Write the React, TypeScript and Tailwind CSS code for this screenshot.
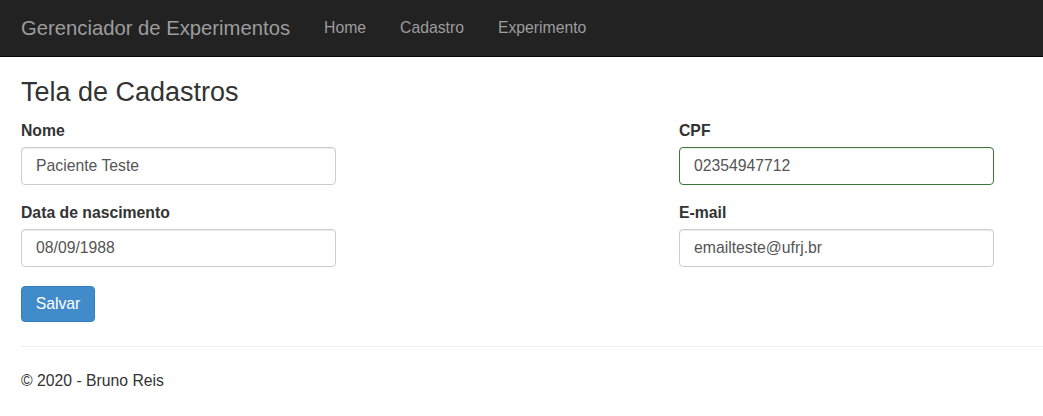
import React from 'react'

const navLinks = ['Home', 'Cadastro', 'Experimento']

function Field({label, value, success}: {label: string; value: string; success?: boolean}) {
  return (
    <div className="flex flex-col">
      <label className="text-[15.75px] leading-[22px] font-bold text-[#333]">{label}</label>
      <input
        readOnly
        value={value}
        className={`mt-[5px] w-[315px] h-[38px] rounded-[4px] border px-[14px] text-[15.75px] text-[#555] bg-white outline-none shadow-[inset_0_1px_1px_rgba(0,0,0,0.075)] ${success ? 'border-[#3c763d]' : 'border-[#ccc]'}`}
      />
    </div>
  )
}

export default function App() {
  return (
    <div className="min-h-[416px] bg-white font-['Liberation_Sans',Arial,sans-serif]">
      <nav className="h-[57px] bg-[#222] border-b border-[#080808] flex items-center">
        <span className="ml-[21px] text-[20.25px] text-[#9d9d9d]">Gerenciador de Experimentos</span>
        <ul className="flex ml-[17px]">
          {navLinks.map((l) => (
            <li key={l} className="px-[17px] text-[15.75px] text-[#9d9d9d]">{l}</li>
          ))}
        </ul>
      </nav>

      <main className="pl-[21px]">
        <h3 className="mt-[19px] text-[27px] leading-[32px] text-[#333]">Tela de Cadastros</h3>

        <div className="flex mt-[12px]">
          <div className="w-[658px] flex flex-col gap-[17px]">
            <Field label="Nome" value="Paciente Teste" />
            <Field label="Data de nascimento" value="08/09/1988" />
          </div>
          <div className="flex flex-col gap-[17px]">
            <Field label="CPF" value="02354947712" success />
            <Field label="E-mail" value="emailteste@ufrj.br" />
          </div>
        </div>

        <button className="mt-[19px] h-[36px] w-[74px] rounded-[4px] bg-[#428bca] border border-[#357ebd] text-white text-[15.75px]">
          Salvar
        </button>

        <hr className="mt-[24px] border-t border-[#eee]" />

        <footer className="mt-[23px] text-[15.75px] leading-[22px] text-[#333]">© 2020 - Bruno Reis</footer>
      </main>
    </div>
  )
}
